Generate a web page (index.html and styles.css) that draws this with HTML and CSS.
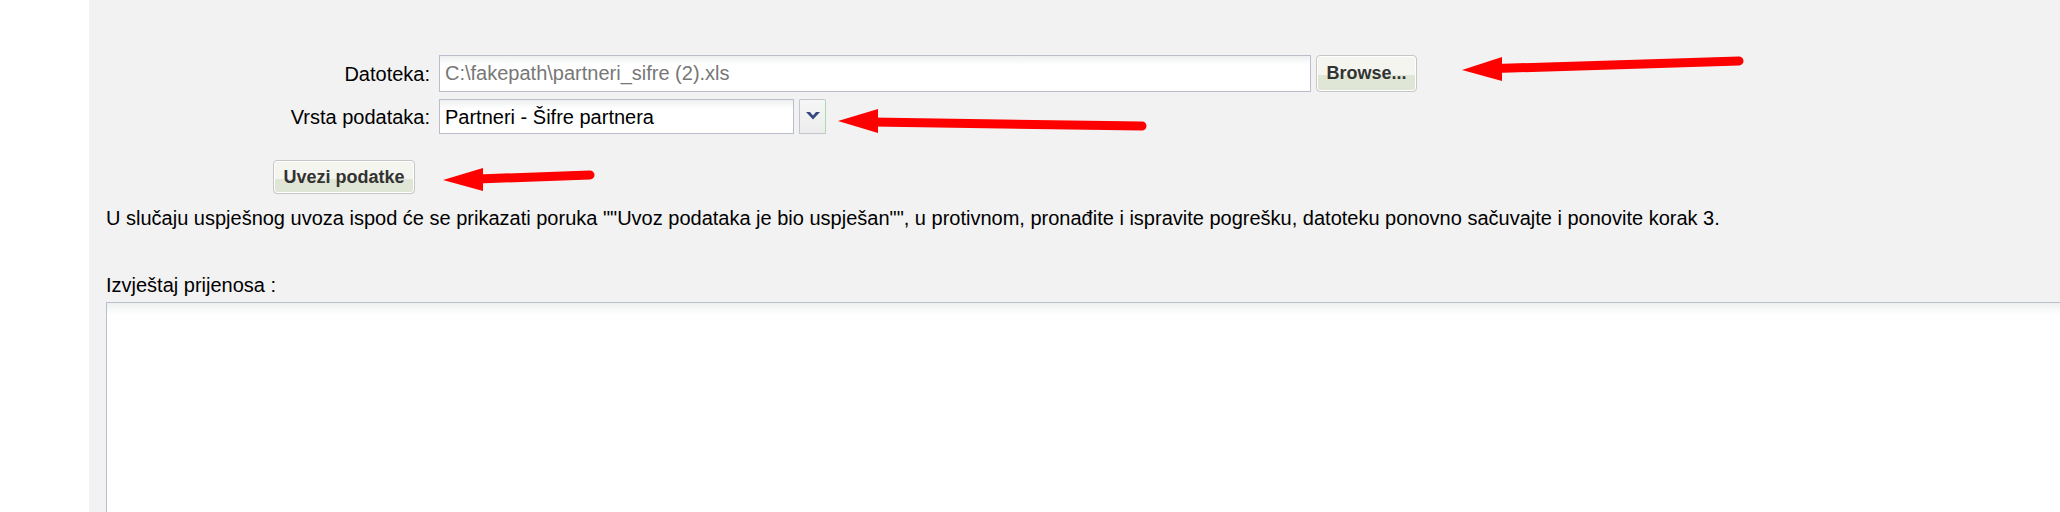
FILE: index.html
```html
<!DOCTYPE html>
<html lang="hr">
<head>
<meta charset="utf-8">
<title>Uvoz podataka</title>
<link rel="stylesheet" href="styles.css">
</head>
<body>
<div class="page">
  <aside class="side"></aside>
  <main class="main">
    <div class="form">
      <label class="lbl" for="file">Datoteka:</label>
      <div class="cell">
        <input id="file" class="field file-field" type="text" value="C:\fakepath\partneri_sifre (2).xls" readonly>
        <button class="btn browse" type="button">Browse...</button>
      </div>
      <label class="lbl" for="vrsta">Vrsta podataka:</label>
      <div class="cell">
        <select id="vrsta" class="field select-field">
          <option>Partneri - Šifre partnera</option>
        </select>
        <span class="dd-btn">
          <svg class="chev" width="14" height="8" viewBox="0 0 14 8"><polygon points="0,0 4,0 7,3.6 10,0 14,0 7,7.6" fill="#34497c"/></svg>
        </span>
      </div>
    </div>
    <button class="btn import" type="button">Uvezi podatke</button>
    <p class="info">U slučaju uspješnog uvoza ispod će se prikazati poruka ""Uvoz podataka je bio uspješan"", u protivnom, pronađite i ispravite pogrešku, datoteku ponovno sačuvajte i ponovite korak 3.</p>
    <div class="report-label">Izvještaj prijenosa :</div>
    <textarea class="report"></textarea>
  </main>
</div>
<svg class="arrows" width="2060" height="512" viewBox="0 0 2060 512">
  <g fill="#ff0000" stroke="#ff0000" stroke-linecap="round">
    <line x1="1496" y1="68.5" x2="1739" y2="61" stroke-width="9"/>
    <polygon points="1462,70 1502,57 1502,81" stroke="none"/>
    <line x1="872" y1="122" x2="1142" y2="126" stroke-width="9"/>
    <polygon points="838,121 878,109 878,133" stroke="none"/>
    <line x1="478" y1="179" x2="590" y2="175" stroke-width="9"/>
    <polygon points="443,180 483,168 483,191" stroke="none"/>
  </g>
</svg>
</body>
</html>
```

FILE: styles.css
```css
html, body {
  margin: 0;
  padding: 0;
  background: #ffffff;
}
body {
  position: relative;
  font-family: "Liberation Sans", Arial, sans-serif;
  font-size: 20px;
  color: #000;
  overflow: hidden;
  height: 512px;
}
.page {
  display: flex;
  height: 512px;
}
.side {
  width: 89px;
  flex: none;
  background: #ffffff;
}
.main {
  flex: 1;
  background: #f2f2f2;
  padding: 55px 0 0 17px;
  overflow: hidden;
  min-width: 0;
}
.form {
  display: grid;
  grid-template-columns: 324px auto;
  column-gap: 9px;
  row-gap: 7px;
  align-items: center;
}
.lbl {
  text-align: right;
  line-height: 24px;
}
.cell {
  display: flex;
  gap: 5px;
  align-items: stretch;
}
.field {
  box-sizing: border-box;
  border: 1px solid #b9bdcc;
  background: linear-gradient(#eef0f0 0, #ffffff 9px, #ffffff 100%);
  font-family: "Liberation Sans", Arial, sans-serif;
  font-size: 20px;
  padding: 0 5px;
  margin: 0;
  outline: none;
  border-radius: 0;
}
.file-field {
  width: 872px;
  height: 37px;
  color: #777777;
}
.select-field {
  width: 355px;
  height: 35px;
  color: #000;
  -webkit-appearance: none;
  appearance: none;
}
.dd-btn {
  box-sizing: border-box;
  width: 27px;
  height: 35px;
  border: 1px solid #c3c6cc;
  border-right-color: #a6dcae;
  border-radius: 2px 2px 0 0;
  background: linear-gradient(#f6f6f6, #ececec);
  display: flex;
  align-items: center;
  justify-content: center;
}
.chev {
  display: block;
  margin-top: -2px;
}
.btn {
  box-sizing: border-box;
  font-family: "Liberation Sans", Arial, sans-serif;
  font-weight: bold;
  font-size: 18px;
  color: #333333;
  border: 1px solid #c6c6c6;
  border-radius: 4px;
  box-shadow: inset 0 0 0 1px #ffffff;
  background: linear-gradient(#f4f5ef 0, #f4f5ef 55%, #e0e6d6 55%, #e0e6d6 100%);
  padding: 0;
  margin: 0;
  cursor: pointer;
}
.browse {
  width: 101px;
  height: 37px;
}
.import {
  display: block;
  width: 142px;
  height: 34px;
  margin: 26px 0 0 167px;
}
.info {
  margin: 12px 0 0 0;
  line-height: 24px;
  white-space: nowrap;
}
.report-label {
  margin-top: 43px;
  line-height: 24px;
}
.report {
  display: block;
  box-sizing: border-box;
  margin: 5px 0 0 0;
  width: 2100px;
  height: 320px;
  border: 1px solid #b9bdcc;
  background: linear-gradient(#eef0f0 0, #ffffff 12px, #ffffff 100%);
  resize: none;
  font-family: "Liberation Sans", Arial, sans-serif;
  font-size: 20px;
  outline: none;
}
.arrows {
  position: absolute;
  top: 0;
  left: 0;
  pointer-events: none;
}
```
